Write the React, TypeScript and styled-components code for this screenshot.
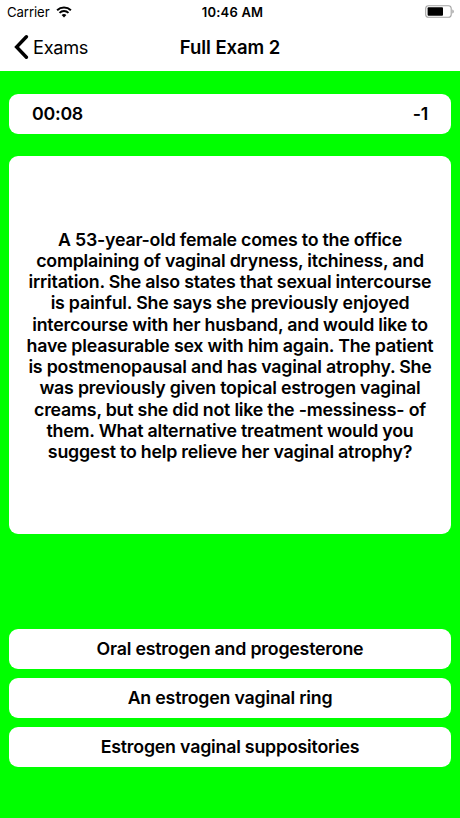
import React from 'react';
import styled, { createGlobalStyle } from 'styled-components';

const GlobalStyle = createGlobalStyle`
  * { box-sizing: border-box; }
  body { margin: 0; background: #00ff00; }
`;

const Screen = styled.main`
  width: 460px;
  height: 818px;
  overflow: hidden;
  background: #00ff00;
  color: #000;
  font-family: Inter, "Liberation Sans", sans-serif;
  display: flex;
  flex-direction: column;
`;

const Header = styled.header`
  height: 71px;
  background: #fff;
  flex: none;
`;

const StatusBar = styled.div`
  height: 24px;
  padding: 0 5px 0 7px;
  display: grid;
  grid-template-columns: 1fr auto 1fr;
  align-items: center;
  font-size: 13.2px;
`;

const Carrier = styled.div`
  display: flex;
  align-items: center;
  gap: 6px;
  letter-spacing: -0.1px;
`;

const Clock = styled.div`
  padding-left: 3px;
  font-weight: 600;
  font-size: 13px;
  letter-spacing: 0.2px;
`;

const Battery = styled.div`
  display: flex;
  justify-content: flex-end;
  padding-bottom: 1px;
`;

const NavBar = styled.nav`
  height: 47px;
  padding: 0 14px;
  display: grid;
  grid-template-columns: 1fr auto 1fr;
  align-items: center;
`;

const BackButton = styled.button`
  border: 0;
  padding: 0 0 1px;
  background: none;
  color: inherit;
  display: flex;
  align-items: center;
  gap: 4px;
  font: 400 18.2px Inter, sans-serif;
  letter-spacing: -0.3px;
`;

const Title = styled.h1`
  margin: 0;
  padding-bottom: 2px;
  font-size: 18.5px;
  font-weight: 600;
  letter-spacing: -0.05px;
`;

const Content = styled.div`
  padding: 23px 9px 0;
  display: flex;
  flex-direction: column;
`;

const ScoreBar = styled.section`
  height: 40px;
  padding: 0 23px 1px 23px;
  border-radius: 9px;
  background: #fff;
  display: flex;
  align-items: center;
  justify-content: space-between;
  font-size: 17.8px;
  font-weight: 600;
  letter-spacing: -0.25px;
`;

const QuestionCard = styled.section`
  height: 378px;
  margin-top: 22px;
  padding-top: 1px;
  border-radius: 9px;
  background: #fff;
  display: flex;
  flex-direction: column;
  align-items: center;
  justify-content: center;
`;

const Line = styled.span`
  font-size: 17.8px;
  line-height: 21.2px;
  font-weight: 600;
  letter-spacing: -0.22px;
  white-space: nowrap;
`;

const Answers = styled.div`
  margin-top: 95px;
  display: flex;
  flex-direction: column;
  gap: 9px;
`;

const Answer = styled.button`
  height: 40px;
  padding: 0 0 1px;
  border: 0;
  border-radius: 9px;
  background: #fff;
  color: #000;
  font: 600 17.8px Inter, sans-serif;
  letter-spacing: -0.21px;
`;

const question = [
  'A 53-year-old female comes to the office',
  'complaining of vaginal dryness, itchiness, and',
  'irritation. She also states that sexual intercourse',
  'is painful. She says she previously enjoyed',
  'intercourse with her husband, and would like to',
  'have pleasurable sex with him again. The patient',
  'is postmenopausal and has vaginal atrophy. She',
  'was previously given topical estrogen vaginal',
  'creams, but she did not like the -messiness- of',
  'them. What alternative treatment would you',
  'suggest to help relieve her vaginal atrophy?',
];

const answers = [
  'Oral estrogen and progesterone',
  'An estrogen vaginal ring',
  'Estrogen vaginal suppositories',
];

export default function App() {
  return (
    <Screen>
      <GlobalStyle />
      <Header>
        <StatusBar>
          <Carrier>
            Carrier
            <svg width="16" height="12" viewBox="0 0 16 12">
              <path d="M8 11.6 5.6 9.1a3.5 3.5 0 0 1 4.8 0Z" />
              <path d="M3.5 6.9a6.5 6.5 0 0 1 9 0M1.1 4.2a10 10 0 0 1 13.8 0" fill="none" stroke="#000" strokeWidth="2" />
            </svg>
          </Carrier>
          <Clock>10:46 AM</Clock>
          <Battery>
            <svg width="30" height="13" viewBox="0 0 30 13">
              <rect x="0.7" y="0.7" width="25.5" height="11.6" rx="2.8" fill="none" stroke="#a3a3a3" strokeWidth="1.1" />
              <rect x="2.6" y="2.3" width="15.4" height="8.4" rx="0.9" />
              <path d="M27.3 4.4c2 .7 2 3.5 0 4.2Z" fill="#a3a3a3" />
            </svg>
          </Battery>
        </StatusBar>
        <NavBar>
          <BackButton>
            <svg width="15" height="24" viewBox="0 0 15 24">
              <path d="M12.4 1.8 2.6 12l9.8 10.2" fill="none" stroke="#000" strokeWidth="3.4" strokeLinecap="round" />
            </svg>
            Exams
          </BackButton>
          <Title>Full Exam 2</Title>
        </NavBar>
      </Header>
      <Content>
        <ScoreBar>
          <span>00:08</span>
          <span>-1</span>
        </ScoreBar>
        <QuestionCard>
          {question.map((line) => (
            <Line key={line}>{line}</Line>
          ))}
        </QuestionCard>
        <Answers>
          {answers.map((answer) => (
            <Answer key={answer}>{answer}</Answer>
          ))}
        </Answers>
      </Content>
    </Screen>
  );
}
